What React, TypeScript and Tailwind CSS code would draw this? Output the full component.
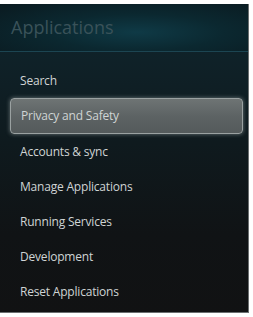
import React from 'react';

const items = [
  'Search',
  'Privacy and Safety',
  'Accounts & sync',
  'Manage Applications',
  'Running Services',
  'Development',
  'Reset Applications',
];

const App = () => {
  const selected = 1;

  return (
    <div className="w-[253px] h-[317px] bg-white pt-[4px] pr-[4px] pb-[4px] font-['Open_Sans',sans-serif]">
      <div className="w-[249px] h-[309px] bg-[#101315] border-r border-b border-[#6b6f70] flex flex-col overflow-hidden">
        {/* Header */}
        <div className="h-[48px] shrink-0 flex items-center pl-[11px] pb-[2px] bg-[radial-gradient(ellipse_at_55%_60%,#0f3a46_0%,#0b2830_45%,#0a1a20_100%)] border-b border-[#1c4552]">
          <span className="text-[18px] leading-none text-[#3a5259]">Applications</span>
        </div>

        {/* Menu */}
        <div className="flex-1 flex flex-col pt-[11px] pl-[10px] pr-[5px] bg-[linear-gradient(180deg,#0f2229_0%,#0f1a1e_35%,#101315_70%,#111213_100%)]">
          {items.map((item, i) => (
            <div
              key={item}
              className={`h-[35px] flex items-center pl-[10px] rounded-[4px] ${
                i === selected
                  ? 'bg-[linear-gradient(180deg,#6e7474_0%,#5d6364_50%,#545a5b_100%)] border border-[#9aa1a1] shadow-[0_0_4px_rgba(170,180,180,0.6)] h-[36px]'
                  : ''
              }`}
            >
              <span className="text-[12px] font-medium text-[#cfd4d4] tracking-[-0.2px]">{item}</span>
            </div>
          ))}
        </div>
      </div>
    </div>
  );
};

export default App;
